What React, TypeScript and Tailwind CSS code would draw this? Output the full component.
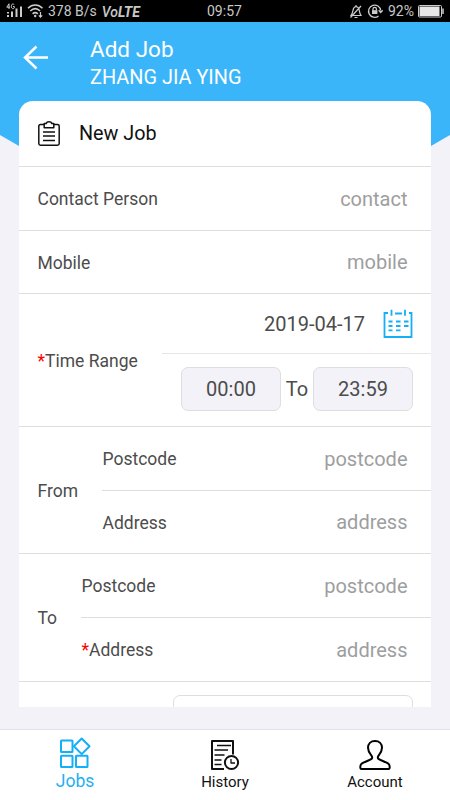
import type { ReactNode } from "react";

type TextFieldProps = {
  label: string;
  placeholder: string;
  required?: boolean;
  className?: string;
};

const Label = ({ text, required }: { text: string; required?: boolean }) => (
  <span className="block pl-[0.5px] pt-[2px] text-[17.5px] text-[#4c4c4c] whitespace-nowrap">
    {required && <span className="text-[#f00]">*</span>}
    {text}
  </span>
);

const TextField = ({ label, placeholder, required, className }: TextFieldProps) => (
  <div className={`flex items-center justify-between pr-[23.5px] ${className ?? ""}`}>
    <Label text={label} required={required} />
    <span className="text-[20px] text-[#9e9e9e]">{placeholder}</span>
  </div>
);

const TimeBox = ({ value }: { value: string }) => (
  <div className="flex h-11 w-[100px] items-center justify-center rounded-[7px] border border-[#dedee0] bg-[#f3f2f8] text-[20px] text-[#4c4c4c]">
    {value}
  </div>
);

const StatusBar = () => (
  <div className="flex h-[22px] shrink-0 items-center bg-black px-[6px] text-[14px] text-[#c8c8c8]">
    <div className="flex w-[201px] items-center">
      <svg width="17" height="16" viewBox="0 0 17 16" fill="#ccc">
        <path d="M3 0.8 0.8 4.2H4M3 .8V6M8.2 1.7C7.5.5 5.3.6 5.3 3.4s2.4 2.7 3 1.5V3.5H7" fill="none" stroke="#ccc" strokeWidth="1" />
        <rect x="1" y="12" width="2" height="2" />
        <rect x="1" y="9" width="2" height="1.5" />
        <rect x="5" y="8.5" width="2" height="5.5" />
        <rect x="9.5" y="5.5" width="2" height="8.5" />
        <rect x="14" y="3.5" width="2" height="10.5" />
      </svg>
      <svg className="ml-[4px]" width="18" height="16" viewBox="0 0 18 16" fill="none" stroke="#ccc" strokeWidth="1.6">
        <path d="M1 5.2c4.2-4.2 10.3-4.2 14.5 0M3.3 8c3-2.9 6.800-2.900 9.800 0M5.600 10.800c1.600-1.500 3.600-1.500 5.200 0" />
        <circle cx="8.2" cy="13" r="1.2" fill="#ccc" stroke="none" />
        <path d="M13.500 9v5M11.800 12.400l1.700 1.700 1.700-1.700" strokeWidth="1.2" />
      </svg>
      <span className="ml-[3px] whitespace-nowrap">378 B/s</span>
      <span className="ml-[5px] pt-[2px] text-[14px] font-medium italic">
        Vo<span className="font-bold">LTE</span>
      </span>
    </div>
    <span className="w-[50px] pt-px">09:57</span>
    <div className="ml-auto flex items-center">
      <svg width="14" height="15" viewBox="0 0 14 15" fill="none" stroke="#ccc" strokeWidth="1.2">
        <path d="M2 11.5h10C10 9 10.7 5.5 9.5 4 8 2 5.5 2 4.500 4.500 3.700 7 4 9 2 11.500zM5.500 13.500h3M7 1v1.300M12 2 1.500 13.500" />
      </svg>
      <svg className="ml-[4px]" width="17" height="16" viewBox="0 0 17 16" fill="none" stroke="#ccc" strokeWidth="1.3">
        <path d="M11.5 12.9A6.1 6.1 0 1 1 13.7 7.5M11.7 7.3l2 2.2 2-2.2" />
        <rect x="5" y="7.2" width="5.4" height="3.8" fill="#ccc" stroke="none" />
        <path d="M6 7.5V6a1.7 1.7 0 0 1 3.4 0v1.5" />
      </svg>
      <span className="ml-[4px] pt-px">92%</span>
      <svg className="ml-[4px]" width="26" height="13" viewBox="0 0 26 13" fill="none">
        <rect x=".5" y=".5" width="23" height="11.5" rx="1" stroke="#ccc" />
        <rect x="1.500" y="1.500" width="20" height="9.500" fill="#e6e6e6" />
        <path d="M25 3.500v5.500" stroke="#ccc" strokeWidth="1.5" />
      </svg>
    </div>
  </div>
);

const Header = () => (
  <header className="flex h-[124px] shrink-0 items-start bg-[#3bb5f9] pl-[22px] text-white [clip-path:polygon(0_0,450px_0,450px_113px,431px_124px,19px_124px,0_113px)]">
    <svg className="mt-[22px]" width="28" height="28" viewBox="0 0 28 28" fill="none" stroke="white" strokeWidth="2.5">
      <path d="M14.500 2.500 3 13.500l11.500 11M3 13.500h23" />
    </svg>
    <div className="ml-10 pt-[13px]">
      <h1 className="text-[22.5px] leading-[29px]">Add Job</h1>
      <p className="text-[19.9px] leading-[28px]">ZHANG JIA YING</p>
    </div>
  </header>
);

const CalendarIcon = () => (
  <svg width="30" height="30" viewBox="0 0 30 30" fill="none" stroke="#15aef8" strokeWidth="1.8">
    <path d="M5 4H1.500v24h27V4H26M12 4.500h7M8.500 0.800v6M22 0.800v6" />
    <path d="M5.500 12.500h4M13 12.500h4.500M21 12.500h4.500M5.500 17h4M13 17h4.500M21 17h4.500M5.500 21.300h4M13 21.300h4.500" />
  </svg>
);

const NavItem = ({ icon, label, className }: { icon: ReactNode; label: string; className: string }) => (
  <div className={`flex flex-1 flex-col items-center ${className}`}>
    {icon}
    {label}
  </div>
);

const BottomNav = () => (
  <nav className="flex h-[71px] shrink-0 border-t border-[#e3e2e8] bg-white">
    <NavItem
      label="Jobs"
      className="pt-[7px] text-[17.5px] leading-[24px] text-[#25aff3]"
      icon={
        <svg width="32" height="32" viewBox="0 0 32 32" fill="none" stroke="#13b0f8" strokeWidth="2" strokeLinejoin="round">
          <rect x="2" y="3.500" width="11.5" height="11.500" rx=".5" />
          <rect x="2" y="18.700" width="11.5" height="11.300" rx=".5" />
          <rect x="17" y="18.700" width="11.5" height="11.300" rx=".5" />
          <path d="m22.700 1.500 7.800 7.800-7.800 7.800-7.800-7.800z" />
        </svg>
      }
    />
    <NavItem
      label="History"
      className="pt-[9px] text-[15px] leading-[23px] text-[#111]"
      icon={
        <svg width="30" height="32" viewBox="0 0 30 32" fill="none" stroke="#111" strokeWidth="2" strokeLinejoin="round">
          <path d="M14 30H2V2h21v13.500" />
          <path d="M7 6.500h14M4.500 11H18M4.500 16h10M4.500 21h7M4.500 25.500h7" strokeWidth="1.5" />
          <circle cx="21.500" cy="23.500" r="6.600" />
          <path d="M21 20v4h4" strokeWidth="1.3" />
        </svg>
      }
    />
    <NavItem
      label="Account"
      className="pt-[9px] text-[15px] leading-[23px] text-[#111]"
      icon={
        <svg width="32" height="32" viewBox="0 0 32 32" fill="none" stroke="#000" strokeWidth="2" strokeLinejoin="round">
          <path d="M12.7 19.7c1-1 .6-2-.6-3.5C10 13.5 9 11 9 8.8 9 4.8 11.7 2 16 2s7 2.800 7 6.800c0 2.200-1 4.700-3.100 7.400-1.200 1.500-1.600 2.500-.6 3.500 1.400 1.400 8 3.300 10.400 5.300 1.200 1 1.300 4.900.3 4.900H2c-1 0-.9-3.900.3-4.900 2.400-2 9-3.900 10.400-5.300z" />
        </svg>
      }
    />
  </nav>
);

export default function App() {
  return (
    <div className="flex h-[800px] w-[450px] flex-col overflow-hidden bg-[#f3f2f8] font-['Roboto',sans-serif]">
      <StatusBar />
      <Header />
      <main className="relative mx-[19px] -mt-[45px] mb-[22px] min-h-0 flex-1 overflow-hidden rounded-t-[14px] bg-white">
        <div className="flex h-[66px] items-center border-b border-[#dedede] pl-[18px]">
          <svg width="24" height="27" viewBox="0 0 24 27" fill="none" stroke="#111" strokeWidth="1.5" strokeLinejoin="round">
            <path d="M7 4.500H3.500Q1.800 4.500 1.800 6.200V23.500Q1.800 25.200 3.500 25.200H20.500Q22.200 25.200 22.200 23.500V6.200Q22.200 4.500 20.500 4.500H17" />
            <path d="M7.200 7.800V3.500h2C9.800 1 14.200 1 14.800 3.500h2v4.300z" />
            <path d="M6 12h12M6 16h12M6 20.500h12" />
          </svg>
          <h2 className="ml-[18px] pt-px text-[19.8px] text-[#111]">New Job</h2>
        </div>

        <TextField label="Contact Person" placeholder="contact" className="h-16 border-b border-[#dedede] pl-[18px]" />
        <TextField label="Mobile" placeholder="mobile" className="h-[63px] border-b border-[#dedede] pl-[18px]" />

        <div className="flex h-[133px] items-center border-b border-[#dedede] pl-[18px]">
          <div className="w-[125px]">
            <Label text="Time Range" required />
          </div>
          <div className="flex-1">
            <div className="flex h-[60px] items-center justify-end border-b border-[#e6e6e6] pr-[18px]">
              <span className="mr-[18px] text-[20px] text-[#4c4c4c]">2019-04-17</span>
              <CalendarIcon />
            </div>
            <div className="flex h-[72px] items-center justify-end pb-[2px] pr-[18px]">
              <TimeBox value="00:00" />
              <span className="w-8 pb-px text-center text-[20px] text-[#4c4c4c]">To</span>
              <TimeBox value="23:59" />
            </div>
          </div>
        </div>

        <div className="flex h-[127px] items-center border-b border-[#dedede] pl-[18px]">
          <div className="w-[65px]">
            <Label text="From" />
          </div>
          <div className="flex-1">
            <TextField label="Postcode" placeholder="postcode" className="h-16 border-b border-[#dedede]" />
            <TextField label="Address" placeholder="address" className="h-[62px]" />
          </div>
        </div>

        <div className="flex h-[128px] items-center border-b border-[#dedede] pl-[18px]">
          <div className="w-[44px]">
            <Label text="To" />
          </div>
          <div className="flex-1">
            <TextField label="Postcode" placeholder="postcode" className="h-16 border-b border-[#dedede]" />
            <TextField label="Address" placeholder="address" required className="h-[63px]" />
          </div>
        </div>

        <div className="flex justify-end pr-[18px] pt-[13px]">
          <div className="h-24 w-[240px] rounded-[7px] border border-[#dedede]" />
        </div>
      </main>
      <BottomNav />
    </div>
  );
}
